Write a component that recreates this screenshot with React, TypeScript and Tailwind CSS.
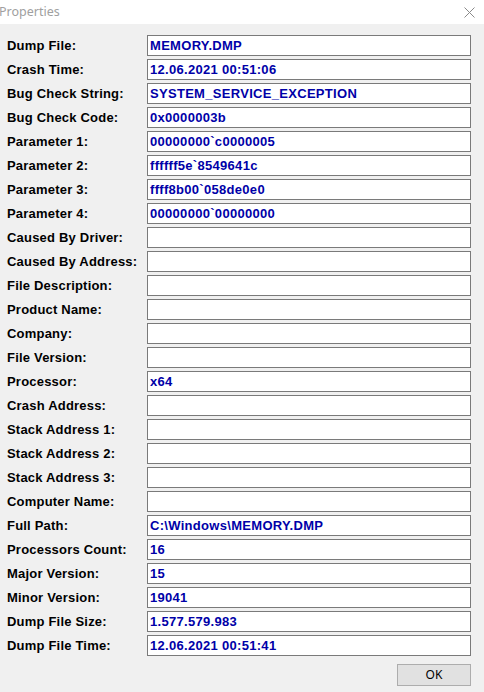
const rows: [string, string][] = [
  ['Dump File:', 'MEMORY.DMP'],
  ['Crash Time:', '12.06.2021 00:51:06'],
  ['Bug Check String:', 'SYSTEM_SERVICE_EXCEPTION'],
  ['Bug Check Code:', '0x0000003b'],
  ['Parameter 1:', '00000000`c0000005'],
  ['Parameter 2:', 'ffffff5e`8549641c'],
  ['Parameter 3:', 'ffff8b00`058de0e0'],
  ['Parameter 4:', '00000000`00000000'],
  ['Caused By Driver:', ''],
  ['Caused By Address:', ''],
  ['File Description:', ''],
  ['Product Name:', ''],
  ['Company:', ''],
  ['File Version:', ''],
  ['Processor:', 'x64'],
  ['Crash Address:', ''],
  ['Stack Address 1:', ''],
  ['Stack Address 2:', ''],
  ['Stack Address 3:', ''],
  ['Computer Name:', ''],
  ['Full Path:', 'C:\\Windows\\MEMORY.DMP'],
  ['Processors Count:', '16'],
  ['Major Version:', '15'],
  ['Minor Version:', '19041'],
  ['Dump File Size:', '1.577.579.983'],
  ['Dump File Time:', '12.06.2021 00:51:41'],
];

export default function App() {
  return (
    <div className="w-[484px] h-[692px] bg-[#f0f0f0] flex flex-col overflow-hidden">
      {/* title bar */}
      <div className="h-[24px] bg-white flex items-center justify-between shrink-0">
        <span className="ml-[-1px] text-[12.5px] text-[#a0a0a0] leading-none" style={{ fontFamily: '"Noto Sans", "Open Sans", sans-serif' }}>
          Properties
        </span>
        <svg width="11" height="11" viewBox="0 0 11 11" className="mr-[9px]">
          <path d="M0.5 0.5 L10.5 10.5 M10.5 0.5 L0.5 10.5" stroke="#8a8a8a" strokeWidth="1" fill="none" />
        </svg>
      </div>

      <div className="flex flex-col gap-[3px] pt-[11px] pl-[7px]" style={{ fontFamily: '"Liberation Sans", Arial, sans-serif' }}>
        {rows.map(([label, value]) => (
          <div key={label} className="flex items-center h-[21px]">
            <div className="w-[140px] text-[13px] font-bold text-black tracking-[0.2px]">{label}</div>
            <div className="w-[324px] h-[21px] bg-white border border-[#7a7a7a] flex items-center px-[2px] text-[13px] font-bold text-[#0000a8] tracking-[0.3px] whitespace-nowrap">
              {value}
            </div>
          </div>
        ))}
      </div>

      <div className="flex justify-end pr-[13px] pt-[8px]">
        <button className="w-[74px] h-[22px] bg-[#e1e1e1] border border-[#adadad] text-[12px] text-black" style={{ fontFamily: '"Noto Sans", "Open Sans", sans-serif' }}>
          OK
        </button>
      </div>
    </div>
  );
}
